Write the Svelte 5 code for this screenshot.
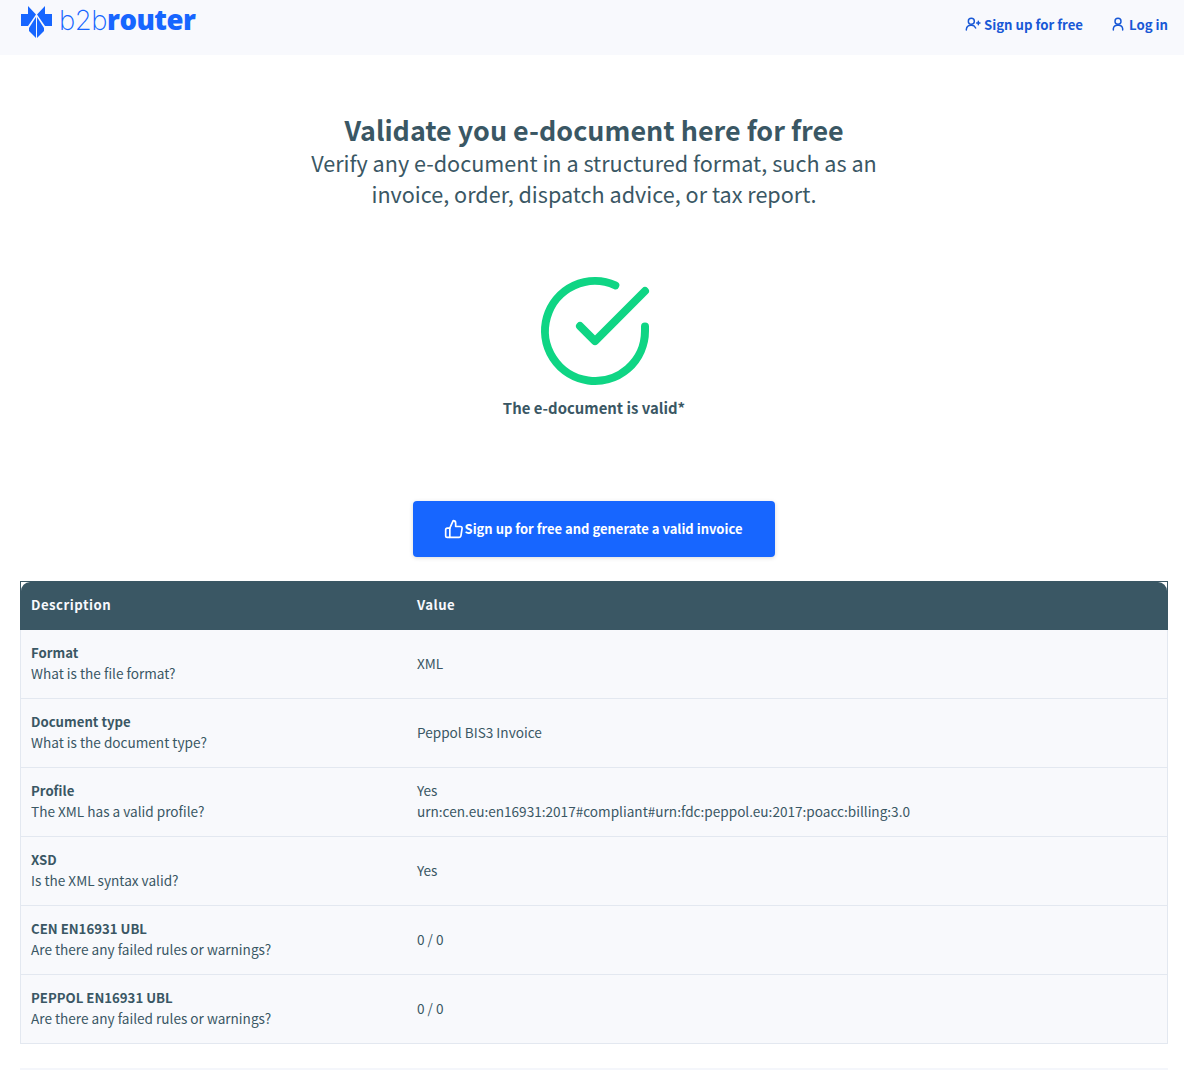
<script>
  let rows = [
    { title: 'Format', question: 'What is the file format?', value: ['XML'] },
    { title: 'Document type', question: 'What is the document type?', value: ['Peppol BIS3 Invoice'] },
    {
      title: 'Profile',
      question: 'The XML has a valid profile?',
      value: ['Yes', 'urn:cen.eu:en16931:2017#compliant#urn:fdc:peppol.eu:2017:poacc:billing:3.0']
    },
    { title: 'XSD', question: 'Is the XML syntax valid?', value: ['Yes'] },
    { title: 'CEN EN16931 UBL', question: 'Are there any failed rules or warnings?', value: ['0 / 0'] },
    { title: 'PEPPOL EN16931 UBL', question: 'Are there any failed rules or warnings?', value: ['0 / 0'] }
  ];
</script>

<header class="topbar">
  <a class="logo" href="#top">
    <svg width="33" height="34" viewBox="0 0 33 34" aria-hidden="true">
      <path d="M1 9h7V1l8 8.500L8 21H1z" fill="#1766ff" />
      <path d="M32 9h-7V1l-8 8.500L25 21h7z" fill="#1766ff" />
      <path d="M16 12L9 23v3l7 7z" fill="#1766ff" />
      <path d="M17 12l7 11v3l-7 7z" fill="#1766ff" />
    </svg>
    <span class="wordmark"><span class="thin">b2b</span><b>router</b></span>
  </a>
  <nav class="links">
    <a href="#signup">
      <svg width="16" height="16" viewBox="0 0 24 24" fill="none" stroke="currentColor" stroke-width="2.200" stroke-linecap="round" stroke-linejoin="round">
        <circle cx="9.500" cy="8" r="4.500" />
        <path d="M2 21v-1a7 7 0 0 1 7-6h1a7 7 0 0 1 6 4" />
        <path d="M20 8v5M17.500 10.500h5" />
      </svg>
      Sign up for free
    </a>
    <a href="#login">
      <svg width="16" height="16" viewBox="0 0 24 24" fill="none" stroke="currentColor" stroke-width="2.200" stroke-linecap="round" stroke-linejoin="round">
        <circle cx="12" cy="8" r="4.500" />
        <path d="M5 21v-2a6 6 0 0 1 6-5h2a6 6 0 0 1 6 5v2" />
      </svg>
      Log in
    </a>
  </nav>
</header>

<main class="page">
  <section class="intro">
    <h1>Validate you e-document here for free</h1>
    <p>Verify any e-document in a structured format, such as an<br />invoice, order, dispatch advice, or tax report.</p>
  </section>

  <section class="result">
    <svg width="120" height="120" viewBox="0 0 24 24" fill="none" stroke="#0fd584" stroke-width="1.600" stroke-linecap="round" stroke-linejoin="round">
      <path d="M22 11.080V12a10 10 0 1 1-5.930-9.140" />
      <polyline points="22 4 12 14.010 9 11.010" />
    </svg>
    <div class="status">The e-document is valid*</div>
  </section>

  <div class="cta">
    <a class="button" href="#signup">
      <svg width="20" height="20" viewBox="0 0 24 24" fill="none" stroke="currentColor" stroke-width="2" stroke-linecap="round" stroke-linejoin="round">
        <path d="M14 9V5a3 3 0 0 0-3-3l-4 9v11h11.300a2 2 0 0 0 2-1.700l1.400-9a2 2 0 0 0-2-2.300z" />
        <path d="M7 22H4a2 2 0 0 1-2-2v-7a2 2 0 0 1 2-2h3" />
      </svg>
      Sign up for free and generate a valid invoice
    </a>
  </div>

  <table>
    <thead>
      <tr>
        <th class="desc"><div>Description</div></th>
        <th><div>Value</div></th>
      </tr>
    </thead>
    <tbody>
      {#each rows as row}
        <tr>
          <td class="desc"><strong>{row.title}</strong><br />{row.question}</td>
          <td>
            {#each row.value as line, i}
              {#if i > 0}<br />{/if}{line}
            {/each}
          </td>
        </tr>
      {/each}
    </tbody>
  </table>

  <div class="footer-line"></div>
</main>

<style>
  :global(body) {
    margin: 0;
    background: #fff;
    color: #3a5764;
    font-family: "Noto Sans CJK SC", "Noto Sans", sans-serif;
    font-size: 16px;
  }

  a {
    text-decoration: none;
  }

  .topbar {
    height: 55px;
    background: #f8f9fd;
    display: flex;
    justify-content: space-between;
    padding: 0 16px 0 20px;
  }

  .logo {
    display: flex;
    align-items: center;
    height: 44px;
    gap: 6px;
    color: #1766ff;
  }

  .wordmark {
    font-family: "Open Sans", sans-serif;
    font-size: 27.500px;
    letter-spacing: -0.5px;
    line-height: 40px;
    margin-top: -4px;
  }

  .wordmark b {
    font-weight: 800;
  }

  .thin {
    font-family: "Inter", sans-serif;
    font-weight: 200;
  }

  .links {
    display: flex;
    gap: 27px;
    padding-top: 13px;
  }

  .links a {
    display: flex;
    align-items: center;
    gap: 3px;
    height: 22px;
    color: #1858d6;
    font-weight: 600;
    font-size: 13.200px;
  }

  .page {
    padding: 0 16px 0 20px;
  }

  .intro {
    text-align: center;
    padding-top: 57px;
  }

  h1 {
    margin: 0;
    font-size: 26.900px;
    font-weight: 700;
    line-height: 35px;
  }

  .intro p {
    margin: 0;
    font-size: 21.600px;
    line-height: 31px;
  }

  .result {
    margin-top: 62px;
    display: flex;
    flex-direction: column;
    align-items: center;
  }

  .result svg {
    margin-left: 1px;
  }

  .status {
    margin-top: 4px;
    font-weight: 600;
    font-size: 14.900px;
    line-height: 26px;
  }

  .cta {
    display: flex;
    justify-content: center;
    margin-top: 80px;
  }

  .button {
    display: flex;
    align-items: center;
    justify-content: center;
    gap: 1px;
    width: 362px;
    height: 54px;
    padding-bottom: 2px;
    border-radius: 4px;
    background: #1766ff;
    color: #fff;
    font-weight: 600;
    font-size: 13px;
    box-shadow: 0 1px 4px rgba(0, 0, 0, 0.15);
  }

  .button svg {
    margin-left: -2px;
    margin-top: 2px;
  }

  table {
    width: 100%;
    margin-top: 24px;
    border-collapse: separate;
    border-spacing: 0;
    font-size: 13.600px;
    line-height: 21px;
  }

  /* the header's rounded fill sits inside a square hairline, so the corners show white */
  th {
    padding: 0;
    text-align: left;
    background: #fff;
    border-top: 1px solid #3a5764;
  }

  th div {
    height: 44px;
    display: flex;
    align-items: center;
    padding: 0 10px 4px;
    background: #3a5764;
    color: #f8f9fd;
    font-size: 13.200px;
    font-weight: 600;
    letter-spacing: 0.5px;
  }

  th:first-child {
    border-left: 1px solid #3a5764;
  }

  th:first-child div {
    border-top-left-radius: 9px;
  }

  th:last-child {
    border-right: 1px solid #3a5764;
  }

  th:last-child div {
    border-top-right-radius: 9px;
  }

  td {
    height: 69px;
    padding: 0 10px 2px;
    box-sizing: border-box;
    background: #f8f9fc;
    border-bottom: 1px solid #e3e8f0;
  }

  td:first-child {
    border-left: 1px solid #e3e8f0;
  }

  td:last-child {
    border-right: 1px solid #e3e8f0;
  }

  .desc {
    width: 386px;
  }

  strong {
    font-weight: 600;
    font-size: 13.200px;
  }

  .footer-line {
    height: 2px;
    margin-top: 24px;
    background: #f4f6fb;
  }
</style>
